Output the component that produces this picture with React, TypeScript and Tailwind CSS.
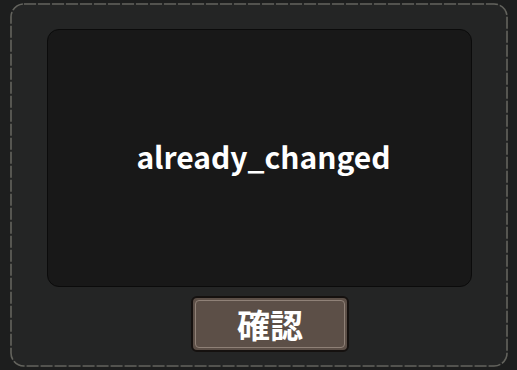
export default function App() {
  return (
    <div
      className="w-[517px] h-[370px] bg-[#1d1e1e] pt-[3px] pb-[3px] pl-[10px] pr-[9px]"
      style={{ fontFamily: '"Noto Sans CJK JP", "Noto Sans", sans-serif' }}
    >
      <div className="relative h-full rounded-[14px] bg-[#242525] flex flex-col pt-[26px] px-[1px]">
        {/* stitched edge */}
        <svg className="absolute inset-0 w-full h-full pointer-events-none" aria-hidden="true">
          <rect
            x="1"
            y="1"
            width="496"
            height="362"
            rx="13"
            fill="none"
            stroke="#63635d"
            strokeWidth="1.6"
            strokeDasharray="12 2"
          />
        </svg>

        {/* message box */}
        <div className="w-[425px] h-[258px] ml-[36px] pl-[8px] rounded-[12px] border border-[#0b0b0b] bg-[#181818] flex items-center justify-center">
          <span className="text-white font-bold text-[30px] leading-none -mt-[4px]">
            already_changed
          </span>
        </div>

        {/* confirm button */}
        <button
          type="button"
          className="mt-[9px] ml-[180px] w-[158px] h-[56px] rounded-[6px] border-2 border-[#15110f] bg-[#5c4f47] p-[2px]"
        >
          <div className="h-full w-full rounded-[4px] border border-[#8f8177] flex items-center justify-center">
            <span className="text-white font-bold text-[33px] leading-none">確認</span>
          </div>
        </button>
      </div>
    </div>
  );
}
